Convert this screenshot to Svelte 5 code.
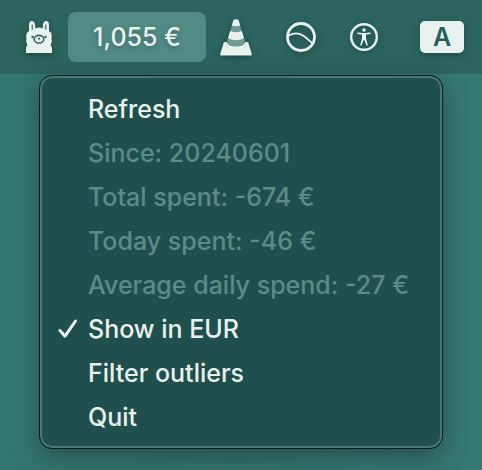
<script>
  let inEur = $state(true);
  let filterOutliers = $state(false);

  const stats = [
    'Since: 20240601',
    'Total spent: -674 €',
    'Today spent: -46 €',
    'Average daily spend: -27 €'
  ];
</script>

{#snippet tick(on)}
  <span class="mark">
    {#if on}
      <svg width="20" height="20" viewBox="0 0 20 20" aria-hidden="true">
        <path d="M2 11.5 L7 17.2 L17.5 2" fill="none" stroke="currentColor" stroke-width="3" stroke-linecap="round" stroke-linejoin="round" />
      </svg>
    {/if}
  </span>
{/snippet}

<div class="desktop">
  <header class="bar">
    <button class="icon" aria-label="Llama">
      <svg width="26" height="32" viewBox="0 0 26 32">
        <path fill="#e9f1f0" d="M0 32 V28 Q0 26 1.4 24 Q-.4 21 .5 18 Q-.7 12 3 10 V4 Q3.2 0 5.8 0 Q8.4 0 9.2 4 V7.5 Q13 5.5 16.8 7.5 V4 Q17.6 0 20.2 0 Q22.8 0 23 4 V10 Q26.7 12 25.5 18 Q26.4 21 24.6 24 Q26 26 26 28 V32 Z" />
        <path d="M6.3 4.2 V8 M19.7 4.2 V8" stroke="#5c8580" stroke-width="1.6" stroke-linecap="round" />
        <ellipse cx="13" cy="18.2" rx="4.8" ry="3.8" fill="none" stroke="#34645f" stroke-width="1.6" />
        <circle cx="6.6" cy="16" r="1.2" fill="#34645f" />
        <circle cx="19.4" cy="16" r="1.2" fill="#34645f" />
        <path d="M12.3 17.3 L13 17.8 L13.7 17.3 M13 17.8 V18.7" fill="none" stroke="#34645f" stroke-width="1.2" stroke-linecap="round" />
      </svg>
    </button>
    <button class="amount" aria-haspopup="menu" aria-expanded="true">1,055 €</button>
    <button class="icon" aria-label="Media player">
      <svg width="32" height="37" viewBox="0 0 32 37">
        <path d="M5.5 23 H26.5 Q28 23 28.4 24.2 L31.8 35 Q32 36.5 30.8 36.5 H1.2 Q0 36.5 .2 35 L3.6 24.2 Q4 23 5.5 23 Z" fill="#e9f1f0" />
        <path d="M13.5 1 Q16 -.3 18.5 1 L25.3 23.5 Q24 27.5 16 27.5 Q8 27.5 6.7 23.5 Z" fill="#6f9993" />
        <path d="M13.5 1 Q16 -.3 18.5 1 L20.2 6.5 Q16 8 11.8 6.5 Z" fill="#e9f1f0" />
        <path d="M10.2 12 Q16 14.5 21.8 12 L24 19.3 Q16 23 8 19.3 Z" fill="#e9f1f0" />
      </svg>
    </button>
    <button class="icon spaced" aria-label="Monitor">
      <svg width="30" height="30" viewBox="0 0 30 30" fill="none" stroke="#e9f1f0">
        <circle cx="15" cy="15" r="13.5" stroke-width="2.8" />
        <path d="M2 14 C7 10.5 12 10.5 17 13.5 C20.5 15.8 23 18.5 26 21" stroke-width="1.8" />
      </svg>
    </button>
    <button class="icon spaced" aria-label="Accessibility">
      <svg width="28" height="28" viewBox="0 0 28 28">
        <circle cx="14" cy="14" r="12.8" fill="none" stroke="#e9f1f0" stroke-width="2.4" />
        <circle cx="14" cy="7" r="1.8" fill="#e9f1f0" />
        <path d="M7.5 9.5 L12.2 10 H15.8 L20.5 9.5 Q21.3 10.3 20.5 10.9 L16 11.6 V15.5 L17.8 22 Q17.3 23 16.5 22.4 L14.3 17 H13.7 L11.5 22.4 Q10.7 23 10.2 22 L12 15.5 V11.6 L7.5 10.9 Q6.7 10.3 7.5 9.5 Z" fill="#e9f1f0" />
      </svg>
    </button>
    <button class="input-source" aria-label="Input source A">A</button>
  </header>

  <ul class="menu" role="menu">
    <li role="none"><button class="row" role="menuitem">{@render tick(false)}Refresh</button></li>
    {#each stats as line}
      <li role="none"><button class="row" role="menuitem" disabled>{@render tick(false)}{line}</button></li>
    {/each}
    <li role="none">
      <button class="row" role="menuitemcheckbox" aria-checked={inEur} onclick={() => (inEur = !inEur)}>{@render tick(inEur)}Show in EUR</button>
    </li>
    <li role="none">
      <button class="row" role="menuitemcheckbox" aria-checked={filterOutliers} onclick={() => (filterOutliers = !filterOutliers)}>{@render tick(filterOutliers)}Filter outliers</button>
    </li>
    <li role="none"><button class="row" role="menuitem">{@render tick(false)}Quit</button></li>
  </ul>
</div>

<style>
  :global(body) {
    margin: 0;
    background: #347670;
  }
  .desktop {
    box-sizing: border-box;
    min-height: 100vh;
    padding-bottom: 21px;
    background: linear-gradient(90deg, #347770, #33746e 50%, #367973);
    font-family: Inter, "Liberation Sans", sans-serif;
  }
  button {
    border: 0;
    padding: 0;
    background: none;
    color: #e9f1f0;
    font: inherit;
  }
  .bar {
    box-sizing: border-box;
    display: flex;
    align-items: center;
    height: 74px;
    padding: 0 18px 0 26px;
    background: #2c645f;
  }
  .bar svg {
    display: block;
    filter: drop-shadow(0 2px 3px rgba(0, 0, 0, 0.3));
  }
  .amount {
    height: 50px;
    margin: 0 14px 0 16px;
    width: 138px;
    border-radius: 8px;
    background: #518b85;
    font-size: 25px;
    font-weight: 500;
    text-shadow: 0 2px 5px rgba(0, 0, 0, 0.25);
  }
  .spaced {
    margin-left: 34px;
  }
  .input-source {
    width: 44px;
    height: 32px;
    margin-left: auto;
    border-radius: 5px;
    background: #e9f1f0;
    color: #27605a;
    font-size: 25px;
    font-weight: 600;
    line-height: 32px;
    box-shadow: 0 2px 6px rgba(0, 0, 0, 0.25);
  }
  .menu {
    margin: 1px 39px 0;
    padding: 11px 0 9px;
    list-style: none;
    border: 1px solid #071c1b;
    border-radius: 13px;
    background: #20504d;
    box-shadow:
      inset 0 0 0 2px #4d7773,
      0 8px 26px rgba(0, 0, 0, 0.32);
  }
  .row {
    display: flex;
    align-items: center;
    width: 100%;
    height: 44px;
    padding: 0 24px 0 18px;
    font-size: 25px;
    font-weight: 500;
    line-height: 44px;
    white-space: nowrap;
    text-align: left;
  }
  .row:disabled {
    color: #5b8c87;
  }
  .mark {
    flex: none;
    display: flex;
    width: 30px;
  }
</style>
